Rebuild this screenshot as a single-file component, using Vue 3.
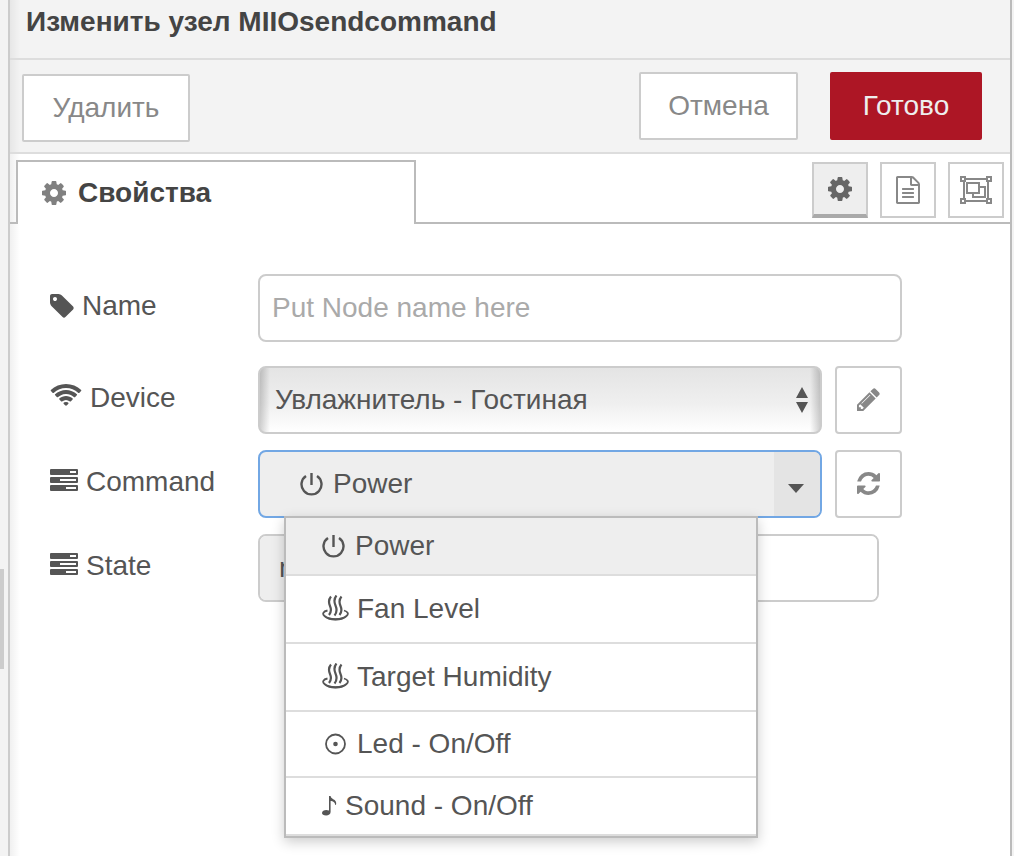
<script setup>
import { ref } from 'vue'

const name = ref('')
const device = ref('humidifier')
const selected = ref('power')
const open = ref(true)

const commands = [
  { id: 'power', icon: 'power', label: 'Power', size: 'short' },
  { id: 'fan', icon: 'steam', label: 'Fan Level', size: 'tall' },
  { id: 'humidity', icon: 'steam', label: 'Target Humidity', size: 'tall' },
  { id: 'led', icon: 'led', label: 'Led - On/Off', size: 'medium' },
  { id: 'sound', icon: 'note', label: 'Sound - On/Off', size: 'short' }
]

const cog = 'M1152 896q0-106-75-181t-181-75-181 75-75 181 75 181 181 75 181-75 75-181zm512-109v222q0 12-8 23t-20 13l-185 28q-19 54-39 91 35 50 107 138 10 12 10 25t-9 23q-27 37-99 108t-94 71q-12 0-26-9l-138-108q-44 23-91 38-16 136-29 186-7 28-36 28h-222q-14 0-24.500-8.500t-11.500-21.500l-28-184q-49-16-90-37l-141 107q-10 9-25 9-14 0-25-11-126-114-165-168-7-10-7-23 0-12 8-23 15-21 51-66.500t54-70.500q-27-50-41-99l-183-27q-13-2-21-12.500t-8-23.500v-222q0-12 8-23t19-13l186-28q14-46 39-92-40-57-107-138-10-12-10-24 0-10 9-23 26-36 98.500-107.500t94.500-71.500q13 0 26 10l138 107q44-23 91-38 16-136 29-186 7-28 36-28h222q14 0 24.500 8.500t11.500 21.500l28 184q49 16 90 37l142-107q9-9 24-9 13 0 25 10 129 119 165 170 7 8 7 22 0 12-8 23-15 21-51 66.500t-54 70.500q26 50 41 98l183 28q13 2 21 12.500t8 23.500z'
</script>

<template>
  <div class="editor">
    <div class="splitter"><div class="handle"></div></div>
    <main class="tray">
      <header class="title">Изменить узел MIIOsendcommand</header>
      <div class="toolbar">
        <button type="button" class="btn delete">Удалить</button>
        <button type="button" class="btn cancel">Отмена</button>
        <button type="button" class="btn primary">Готово</button>
      </div>

      <nav class="tabs">
        <a href="#properties" class="tab">
          <svg class="i24" viewBox="128 128 1536 1536"><path :d="cog" /></svg>
          <span>Свойства</span>
        </a>
        <div class="tab-tools">
          <button type="button" class="tool active" aria-label="Properties">
            <svg class="i24" viewBox="128 128 1536 1536"><path :d="cog" /></svg>
          </button>
          <button type="button" class="tool" aria-label="Description">
            <svg class="doc" viewBox="128 0 1536 1792"><path d="M1596 380q28 28 48 76t20 88v1152q0 40-28 68t-68 28h-1344q-40 0-68-28t-28-68v-1600q0-40 28-68t68-28h896q40 0 88 20t76 48zm-444-244v376h376q-10-29-22-41l-313-313q-12-12-41-22zm384 1528v-1024h-416q-40 0-68-28t-28-68v-416h-768v1536h1280zm-1024-864q0-14 9-23t23-9h704q14 0 23 9t9 23v64q0 14-9 23t-23 9h-704q-14 0-23-9t-9-23v-64zm736 224q14 0 23 9t9 23v64q0 14-9 23t-23 9h-704q-14 0-23-9t-9-23v-64q0-14 9-23t23-9h704zm0 256q14 0 23 9t9 23v64q0 14-9 23t-23 9h-704q-14 0-23-9t-9-23v-64q0-14 9-23t23-9h704z" /></svg>
          </button>
          <button type="button" class="tool" aria-label="Appearance">
            <svg class="group line" viewBox="0 0 32 28">
              <path d="M1 1h4v4h-4zM27 1h4v4h-4zM1 23h4v4h-4zM27 23h4v4h-4zM6 3h20M6 25h20M4 6v16M28 6v16M7 7h12v10h-12zM20 11h5v10h-12v-3" />
            </svg>
          </button>
        </div>
      </nav>

      <form class="form" @submit.prevent>
        <div class="row row-name">
          <label for="node-name">
            <svg class="i24" viewBox="128 128 1536 1536"><path d="M576 448q0-53-37.500-90.500t-90.500-37.500-90.500 37.500-37.500 90.500 37.500 90.500 90.500 37.500 90.500-37.500 37.500-90.500zm1067 576q0 53-37 90l-491 492q-39 37-91 37-53 0-90-37l-715-716q-38-37-64.500-101t-26.500-117v-416q0-52 38-90t90-38h416q53 0 117 26.500t102 64.500l715 714q37 39 37 91z" /></svg>
            Name
          </label>
          <input id="node-name" v-model="name" class="field" type="text" placeholder="Put Node name here" />
        </div>

        <div class="row">
          <label for="node-device">
            <svg class="wifi" viewBox="0 128 2048 1792"><path d="M1024 1523q-20 0-93-73.500t-73-93.500q0-32 62.500-54t103.500-22 103.500 22 62.500 54q0 20-73 93.500t-93 73.500zm270-271q-2 0-40-25t-101.500-50-128.500-25-128.500 25-101 50-40.500 25q-18 0-93.500-75t-75.500-93q0-13 10-23 78-77 196-121t233-44 233 44 196 121q10 10 10 23 0 18-75.500 93t-93.500 75zm273-272q-11 0-23-8-136-105-252-154.500t-268-49.500q-85 0-170.500 22t-149 53-113.500 62-79 53-31 22q-17 0-92-75t-75-93q0-12 10-22 132-132 320-205t380-73 380 73 320 205q10 10 10 22 0 18-75 93t-92 75zm271-271q-11 0-22-9-179-157-371.500-236.500t-420.500-79.500-420.500 79.500-371.500 236.500q-11 9-22 9-17 0-92.500-75t-75.500-93q0-13 10-23 187-186 445-288t527-102 527 102 445 288q10 10 10 23 0 18-75.500 93t-92.500 75z" /></svg>
            Device
          </label>
          <div class="control">
            <div class="select-wrap">
              <select id="node-device" v-model="device" class="field">
                <option value="humidifier">Увлажнитель - Гостиная</option>
              </select>
              <svg class="updown" viewBox="0 0 14 26"><path d="M7 0l6 11H1zM7 26l6-11H1z" /></svg>
            </div>
            <button type="button" class="square" aria-label="Edit device">
              <svg class="i23" viewBox="128 128 1536 1536"><path d="M491 1536l91-91-235-235-91 91v107h128v128h107zm523-928q0-22-22-22-10 0-17 7l-542 542q-7 7-7 17 0 22 22 22 10 0 17-7l542-542q7-7 7-17zm-54-192l416 416-832 832h-416v-416zm683 96q0 53-37 90l-166 166-416-416 166-165q36-38 90-38 53 0 91 38l235 234q37 39 37 91z" /></svg>
            </button>
          </div>
        </div>

        <div class="row">
          <label for="node-command">
            <svg class="tasks" viewBox="0 0 28 27"><path fill-rule="evenodd" d="M1 0h26q1 0 1 1v4q0 1-1 1H1q-1 0-1-1V1q0-1 1-1zM20 2v2h6V2zM1 8h26q1 0 1 1v4q0 1-1 1H1q-1 0-1-1V9q0-1 1-1zM10 10v2h16v-2zM1 16h26q1 0 1 1v4q0 1-1 1H1q-1 0-1-1v-4q0-1 1-1zM16 18v2h10v-2z" /></svg>
            Command
          </label>
          <div class="control">
            <div class="combo">
              <button id="node-command" type="button" class="field combo-button" aria-haspopup="listbox" :aria-expanded="open" @click="open = !open">
                <svg class="power line" viewBox="0 0 23 23"><path d="M11.500 0v12M6 3a10 10 0 1 0 11 0" /></svg>
                <span>Power</span>
                <span class="caret"><svg viewBox="0 0 16 9"><path d="M0 0h16L8 9z" /></svg></span>
              </button>
              <ul v-if="open" class="menu" role="listbox" aria-label="Command">
                <li v-for="c in commands" :key="c.id" role="option" :aria-selected="c.id === selected" :class="[c.size, { selected: c.id === selected }]" @click="selected = c.id">
                  <svg v-if="c.icon === 'power'" class="power line" viewBox="0 0 23 23"><path d="M11.500 0v12M6 3a10 10 0 1 0 11 0" /></svg>
                  <svg v-else-if="c.icon === 'steam'" class="steam" viewBox="0 0 27 28">
                    <path class="thin" d="M5.500 15.500C1 16.500 0 19 2.500 21c4.500 4.500 17.500 4.500 22 0 2.500-2 1.500-4.500-2.500-5.500" />
                    <path d="M2 20.500c4 6.500 19 6.500 23 0-5 3.500-18 3.500-23 0z" />
                    <path class="vapour" d="M9 1.500C6 5 6.500 7.500 8 11c1.500 3.500 1.500 6-1 9M14.500.5C11.500 4 12 7 13.500 10.500c1.500 3.500 1.500 7-1 10M19.500 1.500C16.500 5 17 7.500 18.500 11c1.500 3.500 1.500 6-1 9" />
                  </svg>
                  <svg v-else-if="c.icon === 'led'" class="led" viewBox="0 0 27 22"><circle class="thin" cx="13.500" cy="11" r="9.500" /><circle cx="13.500" cy="11" r="2.300" /></svg>
                  <svg v-else class="note" viewBox="0 0 15 20"><path d="M7 0h1.600c.4 3.500 5.900 3 5.600 7.500-.1 1-.4 1.600-1 1.600 0-3.400-2.600-4-4.600-4.200V16c0 2.200-2 3.400-4.500 3.400C1.500 19.400 0 18.600 0 17c0-2.500 4-3.800 7-2.400z" /></svg>
                  <span>{{ c.label }}</span>
                </li>
              </ul>
            </div>
            <button type="button" class="square" aria-label="Refresh commands">
              <svg class="i23" viewBox="128 128 1536 1536"><path d="M1639 1056q0 5-1 7-64 268-268 434.500t-478 166.500q-146 0-282.500-55t-243.500-157l-129 129q-19 19-45 19t-45-19-19-45v-448q0-26 19-45t45-19h448q26 0 45 19t19 45-19 45l-137 137q71 66 161 102t187 36q134 0 250-65t186-179q11-17 53-117 8-23 30-23h192q13 0 22.500 9.500t9.500 22.500zm25-800v448q0 26-19 45t-45 19h-448q-26 0-45-19t-19-45 19-45l138-138q-148-137-349-137-134 0-250 65t-186 179q-11 17-53 117-8 23-30 23h-199q-13 0-22.500-9.500t-9.500-22.500v-7q65-268 270-434.500t480-166.500q146 0 284 55.500t245 156.500l130-129q19-19 45-19t45 19 19 45z" /></svg>
            </button>
          </div>
        </div>

        <div class="row">
          <label for="node-state">
            <svg class="tasks" viewBox="0 0 28 27"><path fill-rule="evenodd" d="M1 0h26q1 0 1 1v4q0 1-1 1H1q-1 0-1-1V1q0-1 1-1zM20 2v2h6V2zM1 8h26q1 0 1 1v4q0 1-1 1H1q-1 0-1-1V9q0-1 1-1zM10 10v2h16v-2zM1 16h26q1 0 1 1v4q0 1-1 1H1q-1 0-1-1v-4q0-1 1-1zM16 18v2h10v-2z" /></svg>
            State
          </label>
          <div class="field typed">
            <button type="button" class="type">msg.</button>
            <input id="node-state" type="text" />
          </div>
        </div>
      </form>
    </main>
  </div>
</template>

<style>
body {
  margin: 0;
  background: #f3f3f3;
}
</style>

<style scoped>
* {
  box-sizing: border-box;
}
.editor {
  display: flex;
  min-height: 100vh;
  padding-right: 2px;
  background: #f3f3f3;
  color: #555;
  font-family: "Liberation Sans", Arial, sans-serif;
  font-size: 28px;
  line-height: 40px;
}
button,
input,
select {
  margin: 0;
  font: inherit;
  color: inherit;
}
svg {
  display: block;
  flex: none;
  fill: currentColor;
}
.line {
  fill: none;
  stroke: currentColor;
  stroke-width: 2;
}
.power {
  stroke-width: 2.4;
}
.thin {
  fill: none;
  stroke: currentColor;
  stroke-width: 1.8;
}
.vapour {
  fill: none;
  stroke: currentColor;
  stroke-width: 2.2;
}
.i24 { width: 24px; height: 24px; }
.i23 { width: 23px; height: 23px; }
.doc { width: 24px; height: 28px; }
.group { width: 32px; height: 28px; }
.wifi { width: 32px; height: 28px; }
.tasks { width: 28px; height: 27px; }
.power { width: 23px; height: 23px; }
.steam { width: 27px; height: 28px; }
.led { width: 27px; height: 22px; }
.note { width: 15px; height: 20px; }

.splitter {
  flex: none;
  width: 8px;
  padding-top: 569px;
}
.handle {
  width: 4px;
  height: 100px;
  background: #ccc;
}
.tray {
  flex: 1;
  min-width: 0;
  border-left: 2px solid #ccc;
  border-right: 2px solid #bbb;
  background: linear-gradient(to right, rgba(0, 0, 0, 0.06), rgba(0, 0, 0, 0) 10px), #fff;
}
.title {
  padding: 2px 16px 16px;
  border-bottom: 2px solid #ddd;
  background: linear-gradient(to right, rgba(0, 0, 0, 0.05), rgba(0, 0, 0, 0) 10px), #f3f3f3;
  color: #444;
  font-weight: bold;
}
.toolbar {
  display: flex;
  align-items: flex-start;
  padding: 12px 28px 10px 12px;
  border-bottom: 2px solid #ddd;
  background: linear-gradient(to right, rgba(0, 0, 0, 0.05), rgba(0, 0, 0, 0) 10px), #f3f3f3;
}
.btn {
  height: 68px;
  padding: 0;
  border: 2px solid #ccc;
  border-radius: 2px;
  background: #fff;
  color: #888;
}
.delete {
  width: 168px;
  margin-top: 2px;
  margin-right: auto;
}
.cancel {
  width: 159px;
  margin-right: 32px;
}
.primary {
  width: 152px;
  border-color: #ad1625;
  background: #ad1625;
  color: #eee;
}
.tabs {
  display: flex;
  justify-content: space-between;
  height: 70px;
  padding: 6px 6px 0;
  background: linear-gradient(#bbb, #bbb) left bottom / 100% 2px no-repeat;
}
.tab {
  display: flex;
  align-items: center;
  gap: 12px;
  width: 400px;
  padding-left: 24px;
  border: 2px solid #bbb;
  border-bottom: 0;
  background: #fff;
  color: #444;
  font-weight: bold;
  text-decoration: none;
}
.tab svg {
  color: #808080;
}
.tab-tools {
  display: flex;
  gap: 12px;
  padding-top: 2px;
}
.tool {
  display: flex;
  align-items: center;
  justify-content: center;
  width: 56px;
  height: 56px;
  padding: 0;
  border: 2px solid #ccc;
  background: #fff;
  color: #888;
}
.tool.active {
  border-bottom: 4px solid #aaa;
  background: #eee;
  color: #666;
}
.form {
  display: flex;
  flex-direction: column;
  gap: 16px;
  padding: 50px 108px 40px 40px;
}
.row {
  display: grid;
  grid-template-columns: 208px minmax(0, 1fr);
}
.row-name {
  margin-bottom: 8px;
}
label {
  display: flex;
  align-items: center;
  gap: 8px;
  padding-bottom: 4px;
}
.control {
  display: grid;
  grid-template-columns: minmax(0, 1fr) 67px;
  gap: 13px;
}
.field {
  width: 100%;
  height: 68px;
  border: 2px solid #ccc;
  border-radius: 8px;
  background: #fff;
  outline: 0;
}
input.field {
  padding: 0 12px;
}
input::placeholder {
  color: #aaa;
  opacity: 1;
}
.select-wrap,
.combo {
  position: relative;
}
select.field {
  display: block;
  padding: 0 44px 0 15px;
  appearance: none;
  background:
    linear-gradient(to right, rgba(0, 0, 0, 0.18), rgba(0, 0, 0, 0) 10px),
    linear-gradient(to left, rgba(0, 0, 0, 0.18), rgba(0, 0, 0, 0) 10px),
    linear-gradient(#e4e4e4, #efefef 55%, #fff);
}
.updown {
  position: absolute;
  top: 21px;
  right: 13px;
  width: 14px;
  height: 26px;
  pointer-events: none;
}
.square {
  display: flex;
  align-items: center;
  justify-content: center;
  height: 68px;
  padding: 0 0 2px;
  border: 2px solid #ccc;
  border-radius: 4px;
  background: #fff;
  color: #888;
}
.combo-button {
  display: flex;
  align-items: center;
  gap: 10px;
  padding: 0 0 0 40px;
  border-color: #72a7e4;
  background: #eee;
  overflow: hidden;
}
.caret {
  display: flex;
  align-items: center;
  align-self: stretch;
  justify-content: center;
  width: 46px;
  margin-left: auto;
  padding: 8px 2px 0 0;
  background: #e4e4e4;
}
.caret svg {
  width: 16px;
  height: 9px;
}
.menu {
  position: absolute;
  z-index: 2;
  top: 66px;
  right: 64px;
  left: 26px;
  margin: 0;
  padding: 0;
  border: 2px solid #bbb;
  background: #fff;
  box-shadow: 0 4px 12px rgba(0, 0, 0, 0.2);
  list-style: none;
}
.menu li {
  display: flex;
  align-items: center;
  gap: 8px;
  padding-left: 36px;
  border-bottom: 2px solid #ddd;
}
.menu .short { height: 58px; }
.menu .tall { height: 68px; }
.menu .medium { height: 66px; }
.menu .selected {
  gap: 10px;
  background: #eee;
}
.typed {
  display: flex;
  width: auto;
  margin-right: 23px;
  overflow: hidden;
}
.type {
  flex: none;
  width: 120px;
  padding: 0 0 0 19px;
  border: 0;
  background: #eee;
  text-align: left;
}
.typed input {
  flex: 1;
  min-width: 0;
  padding: 0 12px;
  border: 0;
  outline: 0;
  background: #fff;
}
</style>
